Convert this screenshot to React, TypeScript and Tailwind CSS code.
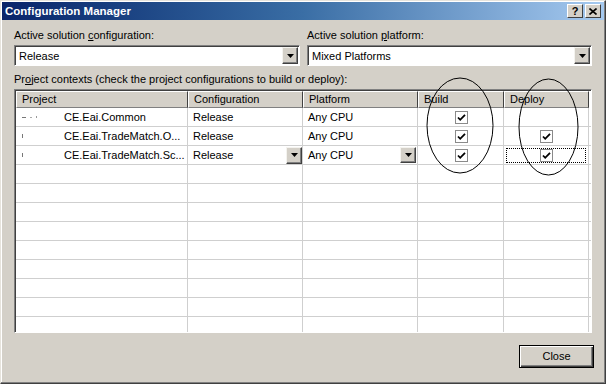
import React from "react";

const rows = [
  { mark: "c", name: "CE.Eai.Common", config: "Release", platform: "Any CPU", build: true, deploy: false, active: false },
  { mark: "i", name: "CE.Eai.TradeMatch.O...", config: "Release", platform: "Any CPU", build: true, deploy: true, active: false },
  { mark: "i", name: "CE.Eai.TradeMatch.Sc...", config: "Release", platform: "Any CPU", build: true, deploy: true, active: true },
];

const emptyRows = Array.from({ length: 10 });

const Arrow = () => (
  <svg width="7" height="4" viewBox="0 0 7 4">
    <path d="M0 0h7L3.5 4z" fill="#000" />
  </svg>
);

const DropButton = ({ className = "" }: { className?: string }) => (
  <div
    className={
      "flex items-center justify-center bg-[#d4d0c8] border border-t-[#f4f3ef] border-l-[#f4f3ef] border-r-[#404040] border-b-[#404040] shadow-[inset_-1px_-1px_0_#808080] " +
      className
    }
  >
    <Arrow />
  </div>
);

const Check = ({ on }: { on: boolean }) =>
  on ? (
    <div className="w-[13px] h-[13px] border border-[#8a8a8a] bg-white flex items-center justify-center">
      <svg width="9" height="9" viewBox="0 0 9 9">
        <path d="M1 4.5l2.2 2.3L8 1.8" stroke="#000" strokeWidth="1.8" fill="none" />
      </svg>
    </div>
  ) : null;

const Combo = ({ value, className = "" }: { value: string; className?: string }) => (
  <div
    className={
      "h-[21px] flex items-center bg-white border border-t-[#808080] border-l-[#808080] border-r-white border-b-white shadow-[inset_1px_1px_0_#404040] " +
      className
    }
  >
    <span className="flex-1 pl-[4px] pt-[1px]">{value}</span>
    <DropButton className="w-[16px] h-[17px] mr-[1px]" />
  </div>
);

const App = () => {
  return (
    <div
      className="relative w-[606px] h-[384px] bg-[#d4d0c8] text-[11px] leading-[13px] text-black overflow-hidden border border-t-[#e6e3dc] border-l-[#e6e3dc] border-r-[#404040] border-b-[#404040] p-[1px] shadow-[inset_-1px_-1px_0_#808080,inset_1px_1px_0_#ffffff]"
      style={{ fontFamily: '"Liberation Sans", Arial, sans-serif' }}
    >
      {/* title bar */}
      <div className="h-[18px] flex items-center pl-[3px] pr-[3px] bg-gradient-to-r from-[#0a246a] via-[#3a6ea5] to-[#a6caf0]">
        <span className="flex-1 text-white font-bold text-[11.5px]">Configuration Manager</span>
        <div className="flex gap-[2px]">
          <div className="w-[16px] h-[14px] bg-[#d4d0c8] border border-t-white border-l-white border-r-[#404040] border-b-[#404040] flex items-center justify-center font-bold text-[11px]">
            ?
          </div>
          <div className="w-[16px] h-[14px] bg-[#d4d0c8] border border-t-white border-l-white border-r-[#404040] border-b-[#404040] flex items-center justify-center">
            <svg width="8" height="7" viewBox="0 0 8 7">
              <path d="M0.5 0.5L7.5 6.5M7.5 0.5L0.5 6.5" stroke="#000" strokeWidth="1.6" />
            </svg>
          </div>
        </div>
      </div>

      <div className="pl-[12px] pr-[10px] pt-[9px]">
        <div className="flex gap-[7px]">
          <div className="w-[286px]">
            <div className="h-[13px] mb-[3px]">
              Active solution <span className="underline">c</span>onfiguration:
            </div>
            <Combo value="Release" />
          </div>
          <div className="w-[285px]">
            <div className="h-[13px] mb-[3px]">
              Active solution <span className="underline">p</span>latform:
            </div>
            <Combo value="Mixed Platforms" />
          </div>
        </div>

        <div className="mt-[7px] h-[13px]">
          Pr<span className="underline">o</span>ject contexts (check the project configurations to build or deploy):
        </div>

        {/* grid */}
        <div className="mt-[3px] w-[578px] h-[244px] bg-white overflow-hidden border border-t-[#808080] border-l-[#808080] border-r-white border-b-white shadow-[inset_1px_1px_0_#404040]">
          <div className="ml-[1px] mt-[1px]">
            <div className="flex h-[17px]">
              {[
                ["Project", "w-[172px]"],
                ["Configuration", "w-[115px]"],
                ["Platform", "w-[115px]"],
                ["Build", "w-[86px]"],
                ["Deploy", "w-[85px]"],
              ].map(([t, w]) => (
                <div
                  key={t}
                  className={
                    w +
                    " h-[17px] pl-[5px] flex items-center bg-[#d4d0c8] border border-t-white border-l-white border-r-[#404040] border-b-[#808080]"
                  }
                >
                  {t}
                </div>
              ))}
            </div>

            {rows.map((r, i) => (
              <div key={i} className="flex h-[19px] border-b border-[#cfcfcf]">
                <div className="w-[172px] flex items-center border-r border-[#cfcfcf]">
                  <div className="w-[48px] pl-[6px] flex items-center gap-[4px]">
                    {r.mark === "c" ? (
                      <>
                        <span className="w-[4px] h-[1px] bg-[#777]" />
                        <span className="w-[2px] h-[1px] bg-[#aaa]" />
                        <span className="w-[1px] h-[2px] bg-[#999]" />
                      </>
                    ) : (
                      <span className="w-[1px] h-[4px] bg-[#777]" />
                    )}
                  </div>
                  <span>{r.name}</span>
                </div>
                <div className="w-[115px] flex items-center pl-[5px] border-r border-[#cfcfcf]">
                  <span className="flex-1">{r.config}</span>
                  {r.active && <DropButton className="w-[16px] h-[17px]" />}
                </div>
                <div className="w-[115px] flex items-center pl-[5px] border-r border-[#cfcfcf]">
                  <span className="flex-1">{r.platform}</span>
                  {r.active && <DropButton className="w-[16px] h-[16px] mr-[1px]" />}
                </div>
                <div className="w-[86px] flex items-center justify-center pl-[1px] border-r border-[#cfcfcf]">
                  <Check on={r.build} />
                </div>
                <div className="w-[85px] flex items-center justify-center border-r border-[#cfcfcf]">
                  <div
                    className={
                      "w-[80px] h-[15px] flex items-center justify-center " +
                      (r.active ? "border border-dotted border-black" : "")
                    }
                  >
                    <Check on={r.deploy} />
                  </div>
                </div>
              </div>
            ))}

            {emptyRows.map((_, i) => (
              <div key={"e" + i} className="flex h-[19px] border-b border-[#cfcfcf]">
                <div className="w-[172px] border-r border-[#cfcfcf]" />
                <div className="w-[115px] border-r border-[#cfcfcf]" />
                <div className="w-[115px] border-r border-[#cfcfcf]" />
                <div className="w-[86px] border-r border-[#cfcfcf]" />
                <div className="w-[85px] border-r border-[#cfcfcf]" />
              </div>
            ))}
          </div>
        </div>

        <div className="flex justify-end mt-[12px]">
          <button className="w-[75px] h-[23px] bg-[#d4d0c8] border border-black shadow-[inset_1px_1px_0_#ffffff,inset_-1px_-1px_0_#404040,inset_-2px_-2px_0_#808080] flex items-center justify-center">
            Close
          </button>
        </div>
      </div>

      {/* hand-drawn circles over the Build / Deploy columns */}
      <svg className="absolute left-0 top-0 pointer-events-none" width="606" height="384">
        <ellipse cx="459" cy="124.5" rx="33" ry="47.5" fill="none" stroke="#000" strokeWidth="1" />
        <ellipse cx="547.5" cy="126" rx="29.5" ry="48" fill="none" stroke="#000" strokeWidth="1" />
      </svg>
    </div>
  );
};

export default App;
